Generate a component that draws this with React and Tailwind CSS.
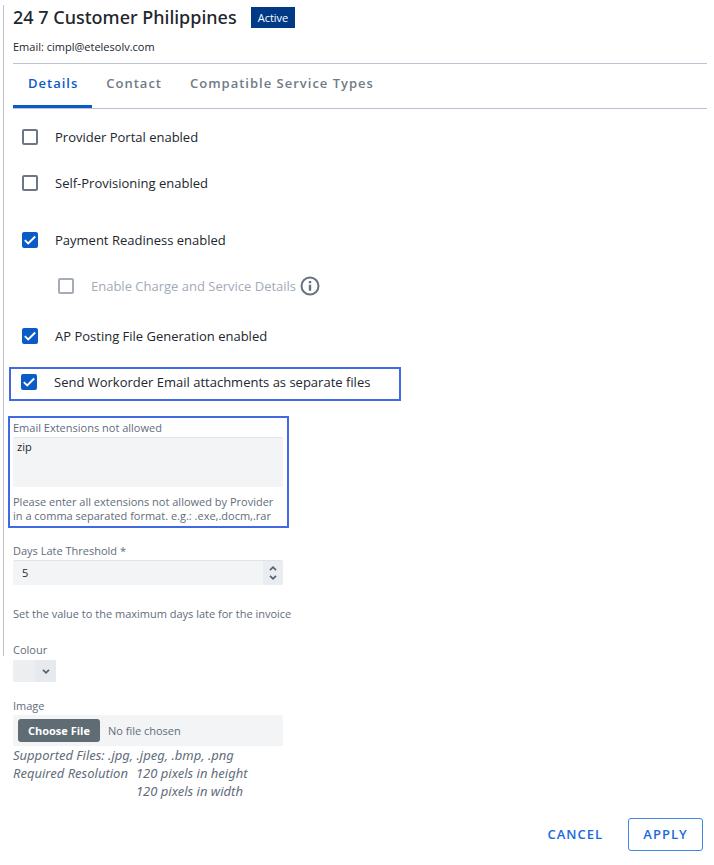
import { useState } from "react";

function Check({ id, label, defaultChecked = false, disabled = false, children }) {
  return (
    <div className="flex items-center">
      <span className="relative flex size-4 shrink-0">
        <input
          id={id}
          type="checkbox"
          defaultChecked={defaultChecked}
          disabled={disabled}
          className="peer size-4 appearance-none rounded-[2px] border-2 border-[#6b7787] bg-white checked:border-[#0b5bc7] checked:bg-[#0b5bc7] disabled:border-[#a6acb8]"
        />
        <svg
          viewBox="0 0 17 17"
          aria-hidden="true"
          className="pointer-events-none absolute inset-0 hidden size-4 peer-checked:block"
        >
          <path d="M3 8.6 6.6 12.2 14 4.8" fill="none" stroke="#fff" strokeWidth="2" />
        </svg>
      </span>
      <label
        htmlFor={id}
        className={disabled ? "ml-[17px] text-[13px] leading-[18px] text-[#a3aab8]" : "ml-[17px] text-[13px] leading-[18px] text-[#22262e]"}
      >
        {label}
      </label>
      {children}
    </div>
  );
}

function Chevron({ up = false }) {
  return (
    <svg viewBox="0 0 8 5" aria-hidden="true" className="h-[5px] w-2">
      <path
        d={up ? "M1 4.2 4 1.2 7 4.2" : "M1 0.8 4 3.8 7 0.8"}
        fill="none"
        stroke="#56616d"
        strokeWidth="1.7"
      />
    </svg>
  );
}

const tabs = ["Details", "Contact", "Compatible Service Types"];

export default function App() {
  const [active, setActive] = useState("Details");
  const [days, setDays] = useState(5);

  return (
    <main className="bg-white pt-[5px] pl-[3px] font-['Open_Sans','Noto_Sans',sans-serif] text-[11px] leading-[14px] text-[#5f6d7b]">
      <div className="border-l border-[#bfc1c6] pr-[7px] pl-[9px]">
        <header className="border-b border-[#bcc4cf] pb-[9px]">
          <div className="flex items-center gap-[14px]">
            <h1 className="font-['Noto_Sans','Open_Sans',sans-serif] text-[18px] leading-6 font-medium text-[#22262e]">
              24 7 Customer Philippines
            </h1>
            <span className="bg-[#003a87] px-[7px] py-1 leading-[13px] text-white">Active</span>
          </div>
          <p className="mt-[11px] text-[#22262e]">Email: cimpl@etelesolv.com</p>
        </header>

        <div role="tablist" className="flex border-b border-[#b9c3cf]">
          {tabs.map((tab) => (
            <button
              key={tab}
              type="button"
              role="tab"
              aria-selected={active === tab}
              onClick={() => setActive(tab)}
              className={
                active === tab
                  ? "h-11 border-b-3 border-[#0b5bc7] pr-[14px] pl-[15px] pb-1 text-[13px] font-semibold tracking-[1px] text-[#0b5bc7]"
                  : "h-11 border-b-3 border-transparent px-[14px] pb-1 text-[13px] font-semibold tracking-[1px] text-[#717b87]"
              }
            >
              {tab}
            </button>
          ))}
        </div>

        <div className="flex flex-col pt-[19px] pl-[9px]">
          <Check id="portal" label="Provider Portal enabled" />
          <div className="mt-7">
            <Check id="self" label="Self-Provisioning enabled" />
          </div>
          <div className="mt-[39px]">
            <Check id="payment" label="Payment Readiness enabled" defaultChecked />
          </div>
          <div className="mt-[27px] pl-9">
            <Check id="charge" label="Enable Charge and Service Details" disabled>
              <svg viewBox="0 0 20 20" role="img" aria-label="Information" className="ml-1 size-5">
                <circle cx="10" cy="10" r="8.5" fill="none" stroke="#66727f" strokeWidth="2" />
                <path d="M10 5v2.2M10 8.8v6" stroke="#66727f" strokeWidth="2.4" />
              </svg>
            </Check>
          </div>
          <div className="mt-[31px]">
            <Check id="posting" label="AP Posting File Generation enabled" defaultChecked />
          </div>
        </div>

        <div className="mt-[22px] -ml-1 w-[392px] max-w-full border-2 border-[#4169e1] px-[10px] pt-1 pb-2">
          <Check id="workorder" label="Send Workorder Email attachments as separate files" defaultChecked />
        </div>

        <div className="mt-[15px] -ml-[5px] w-[281px] border-2 border-[#4169e1] p-[3px]">
          <label htmlFor="extensions" className="block">Email Extensions not allowed</label>
          <textarea
            id="extensions"
            defaultValue="zip"
            className="mt-[2px] block h-[50px] w-[270px] resize-none rounded-[2px] border-t border-[#e1e3e5] bg-[#f3f4f6] px-1 py-[2px] text-[#22262e]"
          />
          <p className="mt-2 whitespace-nowrap">
            Please enter all extensions not allowed by Provider
            <br />
            in a comma separated format. e.g.: .exe,.docm,.rar
          </p>
        </div>

        <label htmlFor="days" className="mt-4 block">Days Late Threshold *</label>
        <div className="mt-[2px] flex h-[25px] w-[270px] overflow-hidden rounded-[2px] border-t border-[#e1e3e5] bg-[#f3f4f6]">
          <input
            id="days"
            type="number"
            value={days}
            onChange={(e) => setDays(Number(e.target.value))}
            className="min-w-0 flex-1 [appearance:textfield] bg-transparent pl-[9px] text-[#22262e] [&::-webkit-inner-spin-button]:appearance-none"
          />
          <div className="flex w-5 flex-col bg-[#e9ecf0]">
            <button type="button" aria-label="Increase" onClick={() => setDays(days + 1)} className="flex flex-1 items-end justify-center pb-[2px]">
              <Chevron up />
            </button>
            <button type="button" aria-label="Decrease" onClick={() => setDays(days - 1)} className="flex flex-1 items-start justify-center pt-[2px]">
              <Chevron />
            </button>
          </div>
        </div>
        <p className="mt-[22px]">Set the value to the maximum days late for the invoice</p>
        <label htmlFor="colour" className="mt-[23px] block leading-3">Colour</label>
      </div>

      <div className="pt-1 pr-[8px] pl-[10px]">
        <div className="relative flex h-[22px] w-[43px] overflow-hidden rounded-[2px] bg-[#eceef0]">
          <select id="colour" className="w-full appearance-none">
            <option value=""></option>
          </select>
          <span className="pointer-events-none absolute inset-y-0 right-0 flex w-[21px] items-center justify-center bg-[#e6e9ee]">
            <Chevron />
          </span>
        </div>

        <label htmlFor="image" className="mt-[17px] block">Image</label>
        <input
          id="image"
          type="file"
          className="mt-[2px] block h-[31px] w-[270px] rounded-[2px] bg-[#f3f4f6] px-[5px] py-1 file:mr-2 file:h-[23px] file:rounded-[3px] file:bg-[#5f6c74] file:px-[10px] file:font-bold file:text-white"
        />
        <div className="font-['Noto_Sans','Open_Sans',sans-serif] text-[13px] leading-[18px] italic">
          <p>Supported Files: .jpg, .jpeg, .bmp, .png</p>
          <div className="flex gap-2">
            <p>Required Resolution</p>
            <p>
              120 pixels in height
              <br />
              120 pixels in width
            </p>
          </div>
        </div>

        <div className="mt-[18px] flex justify-end gap-[10px] pr-[3px] pb-[14px]">
          <button type="button" className="h-[33px] px-[15px] pb-[2px] text-[13px] font-semibold tracking-[1px] text-[#1a6adb]">CANCEL</button>
          <button type="button" className="h-[33px] w-[75px] rounded-[3px] border border-[#3f87e5] pb-[2px] text-[13px] font-semibold tracking-[1px] text-[#1a6adb]">APPLY</button>
        </div>
      </div>
    </main>
  );
}
